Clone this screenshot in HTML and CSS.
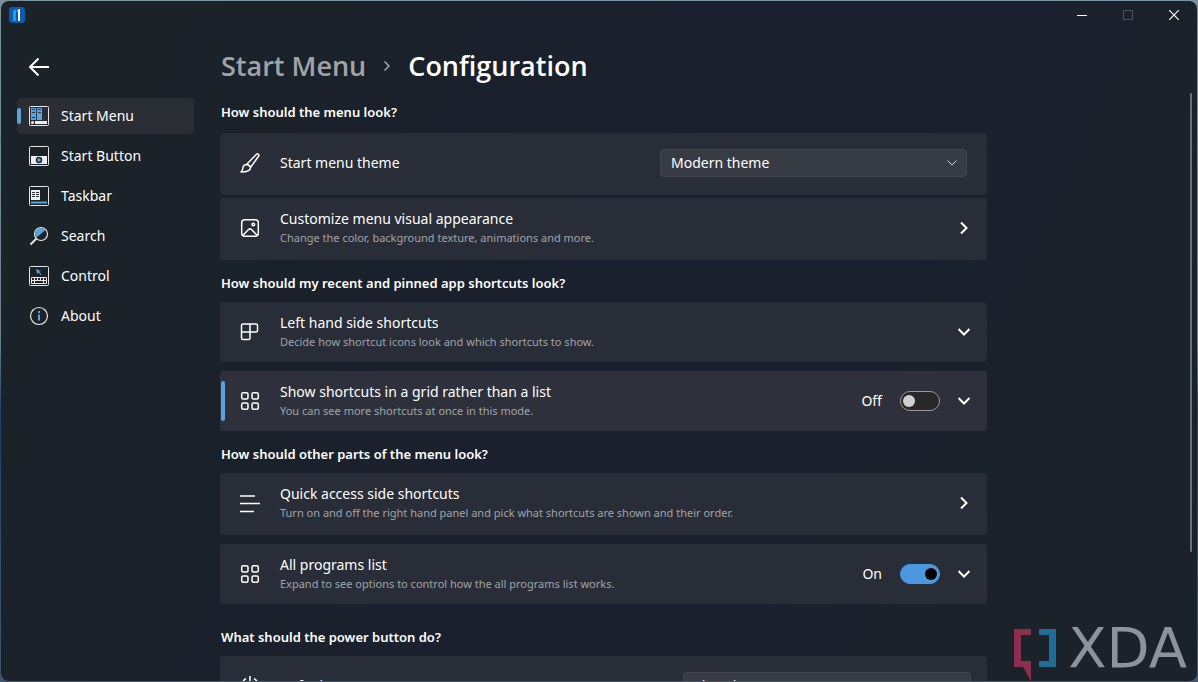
FILE: index.html
```html
<!DOCTYPE html>
<html lang="en">
  <head>
    <meta charset="utf-8">
    <title>Start Menu Configuration</title>
    <link rel="stylesheet" href="styles.css">
  </head>
  <body>
    <div class="window">
      <header class="titlebar">
        <svg class="app-icon" viewBox="0 0 16 16">
          <rect width="16" height="16" rx="3" fill="#0a5cad"/>
          <path d="M4 4l3-2v12h-3z" fill="#2b9be8"/>
          <path d="M8 3l3-1v12h-2v-9z" fill="#fff"/>
        </svg>
        <div class="window-buttons">
          <button aria-label="Minimize"><svg viewBox="0 0 10 10"><path d="M0 5.5h10" stroke="#fff"/></svg></button>
          <button aria-label="Maximize" disabled><svg viewBox="0 0 10 10"><rect x=".5" y=".5" width="9" height="9" stroke="#4c5359"/></svg></button>
          <button aria-label="Close"><svg viewBox="0 0 10 10"><path d="M0 0l10 10M10 0L0 10" stroke="#fff" stroke-width="1.2"/></svg></button>
        </div>
      </header>

      <div class="layout">
        <nav class="sidebar">
          <button class="back" aria-label="Back">
            <svg viewBox="0 0 20 20"><path d="M9.500 1.500L1 10l8.500 8.500M1 10h19" stroke="#fff" stroke-width="2"/></svg>
          </button>
          <a class="nav-item active" href="#start-menu">
            <svg viewBox="0 0 20 20">
              <rect x=".5" y=".5" width="19" height="19" rx="1" stroke="#e6e6e6"/>
              <rect x="2" y="2" width="11" height="12" fill="#5ba2e0"/>
              <path d="M3 3.500h3M3 6.500h3M9 3.500h3M9 6.500h3M3 11.500h3M7.500 2v12" stroke="#22384d"/>
              <circle cx="3.500" cy="16.500" r="1.500" fill="#eee"/>
              <rect x="6" y="15" width="12" height="3" fill="#eee"/>
            </svg>
            Start Menu
          </a>
          <a class="nav-item" href="#start-button">
            <svg viewBox="0 0 20 20">
              <rect x=".5" y=".5" width="19" height="19" rx="1" stroke="#e6e6e6"/>
              <rect x="2" y="10" width="16" height="8" fill="#eee"/>
              <circle cx="10" cy="14" r="2.500" fill="#5ba2e0" stroke="#1b2a3a" stroke-width="1.500"/>
            </svg>
            Start Button
          </a>
          <a class="nav-item" href="#taskbar">
            <svg viewBox="0 0 20 20">
              <rect x=".5" y=".5" width="19" height="19" rx="1" stroke="#e6e6e6"/>
              <rect x="2" y="4" width="9" height="10" fill="#eee"/>
              <path d="M3 6.500h3M7 6.500h3M3 8.500h3M7 8.500h3M3 10.500h3M7 10.500h3" stroke="#26303a"/>
              <path d="M2 16.500h16" stroke="#5ba2e0" stroke-width="2"/>
            </svg>
            Taskbar
          </a>
          <a class="nav-item" href="#search">
            <svg viewBox="0 0 20 20">
              <circle cx="12" cy="8" r="6.500" stroke="#e6e6e6" stroke-width="1.200"/>
              <path d="M7.500 11.500a5.500 5.500 0 0 1 9-7.500z" fill="#5ba2e0"/>
              <path d="M7.500 12.500L1.500 18.500" stroke="#e6e6e6" stroke-width="2"/>
            </svg>
            Search
          </a>
          <a class="nav-item" href="#control">
            <svg viewBox="0 0 20 20">
              <rect x=".5" y=".5" width="19" height="19" rx="1" stroke="#e6e6e6"/>
              <path d="M7 3l5 2-2 .8 2.500 2.500-.8.700-2.500-2.500-1 1.500z" fill="#5ba2e0"/>
              <path d="M2.500 11.500h15v6h-15zM2.500 14.500h15M5.500 11.500v6M8.500 11.500v3M11.500 11.500v3M14.500 11.500v6" stroke="#e6e6e6"/>
            </svg>
            Control
          </a>
          <a class="nav-item" href="#about">
            <svg viewBox="0 0 20 20">
              <circle cx="10" cy="10" r="8.500" stroke="#e6e6e6" stroke-width="1.200"/>
              <path d="M10 5v2M10 8.500v6" stroke="#5ba2e0" stroke-width="2"/>
            </svg>
            About
          </a>
        </nav>

        <main class="content">
          <h1 class="breadcrumb">
            <a href="#start-menu">Start Menu</a>
            <svg viewBox="0 0 8 12"><path d="M1.500 1.500L6 6l-4.500 4.500" stroke="#a0a4a8" stroke-width="1.500"/></svg>
            <span>Configuration</span>
          </h1>

          <div class="scroller">
            <div class="settings">
              <section class="group tight">
                <h2>How should the menu look?</h2>
                <div class="card tall">
                  <svg class="icon" viewBox="0 0 20 20">
                    <path d="M6.500 11.500L16.500 1.200c1.200-1 3 .5 2.200 1.800L10.500 14.500M6.500 11.500c2 .2 3.500 1.500 4 3 0 3-3 4.500-9.500 4.500 1.700-1 1.700-2.500 2-4.500.3-1.800 1.700-3 3.500-3z"/>
                  </svg>
                  <label class="label" for="theme">Start menu theme</label>
                  <span class="select">
                    <select id="theme">
                      <option>Modern theme</option>
                      <option>Classic theme</option>
                    </select>
                    <svg viewBox="0 0 10 6"><path d="M.5.500L5 5 9.500.500"/></svg>
                  </span>
                </div>
                <div class="card tall">
                  <svg class="icon" viewBox="0 0 20 20">
                    <rect x="1.700" y="1.700" width="16.600" height="16.600" rx="3"/>
                    <path d="M3 17.200l5.500-5.700q1.500-1.300 3 0l5.500 5.700"/>
                    <circle cx="13.300" cy="6.500" r="1.300"/>
                  </svg>
                  <div class="label">Customize menu visual appearance<small>Change the color, background texture, animations and more.</small></div>
                  <button class="chevron" aria-label="Open"><svg viewBox="0 0 14 14"><path d="M4 1.500L9.500 7 4 12.500"/></svg></button>
                </div>
              </section>

              <section class="group">
                <h2>How should my recent and pinned app shortcuts look?</h2>
                <div class="card">
                  <svg class="icon" viewBox="0 0 20 20">
                    <path d="M3 2h13q1.500 0 1.500 1.500v5q0 1.500-1.500 1.500H10v6q0 1.500-1.500 1.500H3q-1.500 0-1.500-1.500V3.500Q1.500 2 3 2zM10 2v8M1.500 10H10"/>
                  </svg>
                  <div class="label">Left hand side shortcuts<small>Decide how shortcut icons look and which shortcuts to show.</small></div>
                  <button class="chevron" aria-label="Expand"><svg viewBox="0 0 14 14"><path d="M1.500 4L7 9.500 12.500 4"/></svg></button>
                </div>
                <div class="card selected">
                  <svg class="icon" viewBox="0 0 20 20">
                    <rect x="1.700" y="1.700" width="6.300" height="6.300" rx="1.500"/>
                    <rect x="12" y="1.700" width="6.300" height="6.300" rx="1.500"/>
                    <rect x="1.700" y="12" width="6.300" height="6.300" rx="1.500"/>
                    <rect x="12" y="12" width="6.300" height="6.300" rx="1.500"/>
                  </svg>
                  <div class="label">Show shortcuts in a grid rather than a list<small>You can see more shortcuts at once in this mode.</small></div>
                  <label class="toggle">Off <input type="checkbox"></label>
                  <button class="chevron" aria-label="Expand"><svg viewBox="0 0 14 14"><path d="M1.500 4L7 9.500 12.500 4"/></svg></button>
                </div>
              </section>

              <section class="group">
                <h2>How should other parts of the menu look?</h2>
                <div class="card tall">
                  <svg class="icon" viewBox="0 0 20 20">
                    <path d="M0 3h15M0 10.500h20M0 18.500h14"/>
                  </svg>
                  <div class="label">Quick access side shortcuts<small>Turn on and off the right hand panel and pick what shortcuts are shown and their order.</small></div>
                  <button class="chevron" aria-label="Open"><svg viewBox="0 0 14 14"><path d="M4 1.500L9.500 7 4 12.500"/></svg></button>
                </div>
                <div class="card">
                  <svg class="icon" viewBox="0 0 20 20">
                    <rect x="1.700" y="1.700" width="6.300" height="6.300" rx="1.500"/>
                    <rect x="12" y="1.700" width="6.300" height="6.300" rx="1.500"/>
                    <rect x="1.700" y="12" width="6.300" height="6.300" rx="1.500"/>
                    <rect x="12" y="12" width="6.300" height="6.300" rx="1.500"/>
                  </svg>
                  <div class="label">All programs list<small>Expand to see options to control how the all programs list works.</small></div>
                  <label class="toggle">On <input type="checkbox" checked></label>
                  <button class="chevron" aria-label="Expand"><svg viewBox="0 0 14 14"><path d="M1.500 4L7 9.500 12.500 4"/></svg></button>
                </div>
              </section>

              <section class="group power">
                <h2>What should the power button do?</h2>
                <div class="card tall">
                  <svg class="icon" viewBox="0 0 20 20">
                    <path d="M10 0v9M6 2.500a8 8 0 1 0 8 0"/>
                  </svg>
                  <label class="label" for="power">Default</label>
                  <span class="select">
                    <select id="power">
                      <option>Shut down</option>
                      <option>Restart</option>
                    </select>
                    <svg viewBox="0 0 10 6"><path d="M.5.500L5 5 9.500.500"/></svg>
                  </span>
                </div>
              </section>
            </div>
            <div class="thumb"></div>
          </div>
        </main>
      </div>

      <div class="watermark">
        <svg viewBox="0 0 42 52">
          <path d="M0 0h17v6H7v26h10v20l-8-14H0z" fill="#8c2f4e"/>
          <path d="M25 0h17v38H25v-6h10V6H25z" fill="#216c96"/>
        </svg>
        <span>XDA</span>
      </div>
    </div>
  </body>
</html>
```
FILE: styles.css
```css
*{box-sizing:border-box}
body{
  margin:0;
  height:100vh;
  overflow:hidden;
  background:linear-gradient(#7b929e,#6c7f8c 50%,#1f4272 60%,#3f5570);
  color:#fff;
  font:14px/20px "Noto Sans","Open Sans",sans-serif;
}
svg{fill:none;flex:none}
a{color:inherit;text-decoration:none}
button{border:0;padding:0;background:none;color:inherit;display:flex;align-items:center;justify-content:center}

.window{
  position:relative;
  display:flex;
  flex-direction:column;
  height:calc(100vh - 2px);
  margin:1px;
  border-radius:8px;
  overflow:hidden;
  background:linear-gradient(115deg,#1b2228 12%,#1a202e 50%,#1a202e 65%,#1b222a 85%);
}

/* title bar */
.titlebar{display:flex;justify-content:space-between;align-items:center;height:28px;padding-left:8px;flex:none}
.app-icon{width:16px;height:16px}
.window-buttons{display:flex}
.window-buttons button{width:46px;height:28px}
.window-buttons svg{width:10px;height:10px}

.layout{display:grid;grid-template-columns:219px 1fr;flex:1;min-height:0}

/* sidebar */
.sidebar{display:flex;flex-direction:column;gap:4px;padding:20px 26px 0 16px}
.back{width:44px;height:36px;margin-bottom:9px}
.back svg{width:20px;height:20px}
.nav-item{position:relative;display:flex;align-items:center;gap:12px;height:36px;padding-left:12px;border-radius:4px}
.nav-item svg{width:20px;height:20px}
.nav-item.active{background:#2a2e34}
.nav-item.active::before{content:"";position:absolute;left:0;width:4px;height:16px;border-radius:2px;background:#5ba2e0}

/* content */
.content{display:flex;flex-direction:column;min-width:0;min-height:0}
.breadcrumb{display:flex;align-items:center;gap:17px;margin:18px 0 7px;padding-left:1px;font:600 27px/38px "Open Sans","Noto Sans",sans-serif}
.breadcrumb a{color:#a0a4a8}
.breadcrumb svg{width:8px;height:12px}
.scroller{position:relative;flex:1;min-height:0;overflow:hidden}
.thumb{position:absolute;top:1px;right:5px;width:2px;height:78%;border-radius:1px;background:#6b7075}
.settings{max-width:767px}

.group{display:flex;flex-direction:column;gap:9px}
.group.tight{gap:3px}
.group.power{margin-top:10px}
.group h2{margin:0;padding:13px 1px 0;font-size:13px;line-height:20px;font-weight:600}
.group.tight h2{padding:10px 1px 8px}
.card{position:relative;display:flex;align-items:center;height:60px;padding:0 16px 0 20px;border-radius:4px;background:#282d37}
.card.tall{height:62px;padding-bottom:2px}
.card.selected{background:#2e313c}
.card.selected::before{content:"";position:absolute;left:1px;width:4px;height:40px;border-radius:2px;background:#5ba2e0}
.icon{width:20px;height:20px;margin-right:20px;stroke:#fff;stroke-width:1.5;stroke-linejoin:round}
.label{flex:1}
.label small{display:block;font-size:11px;line-height:18px;color:#a0a4ab}
.chevron svg{width:14px;height:14px;stroke:#fff;stroke-width:2}

.select{position:relative;display:flex;align-items:center;width:42%;margin-right:4px}
.power .select{width:288px;margin-right:0}
.select select{
  appearance:none;
  width:100%;
  height:28px;
  padding:0 10px;
  border:1px solid #42464e;
  border-radius:4px;
  background:#373b43;
  color:inherit;
  font:inherit;
}
.select svg{position:absolute;right:10px;width:10px;height:6px;stroke:#d0d2d5;pointer-events:none}

.toggle{display:flex;align-items:center;gap:18px;margin-right:17px}
.toggle input{appearance:none;display:flex;align-items:center;width:40px;height:20px;margin:0;padding:0 2px;border:1px solid #9a9a9e;border-radius:10px;background:#272727}
.toggle input::before{content:"";width:12px;height:12px;border-radius:50%;background:#d0d0d0}
.toggle input:checked{justify-content:flex-end;border-color:#4a98e0;background:#4a98e0}
.toggle input:checked::before{background:#000}

/* logo over the bottom corner */
.watermark{position:absolute;right:10px;bottom:0;display:flex;gap:12px;color:#8d929b;font:56px/38px "DejaVu Sans",sans-serif}
.watermark svg{width:42px;height:52px}
```
